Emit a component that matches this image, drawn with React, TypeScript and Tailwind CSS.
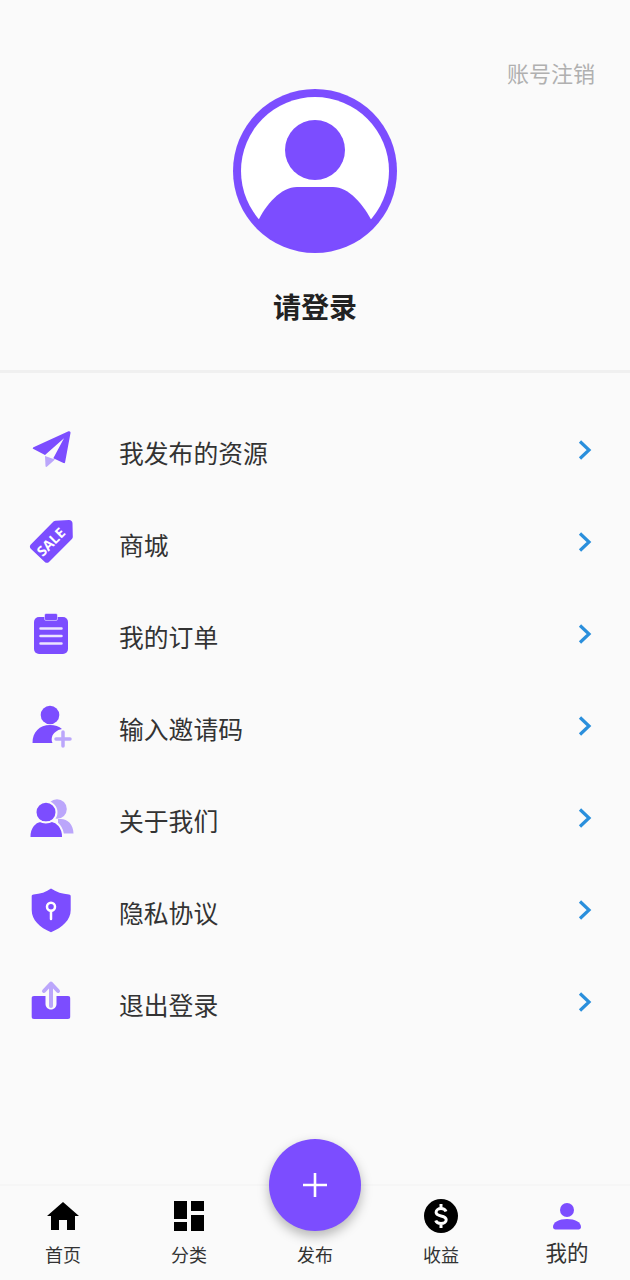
import React from 'react';

const PURPLE = '#7c4dff';
const LIGHT = '#bba6fb';
const CJK = "font-['Roboto','Noto_Sans_CJK_SC',sans-serif]";

const PlaneIcon = () => (
  <svg viewBox="0 0 48 48" className="w-[48px] h-[48px]">
    <path d="M40.500 5.300 5.500 21.300c-1 .5-1 1.300 0 1.800L17 29 36 12.300 25.300 32.300 35.500 37c.8.4 1.400 0 1.600-.8L42.500 7c.2-1.300-.8-2.200-2-1.700Z" fill={PURPLE} />
    <path d="M17 30 17.500 40c.1 1 1 1.200 1.600.6L27 33.500 17 30Z" fill={LIGHT} />
  </svg>
);

const SaleIcon = () => (
  <svg viewBox="0 0 48 48" className="w-[48px] h-[48px]">
    <path d="M2.800 26.500 25.500 3.600c.6-.6 1.300-.9 2.100-.9L41 2c2 0 3.500 1.500 3.500 3.500l.3 13.500c0 .8-.3 1.500-.9 2.100L21 43.900c-1.200 1.200-3 1.200-4.200 0L2.800 30.700c-1.200-1.200-1.200-3 0-4.200Z" fill={PURPLE} />
    <text x="23" y="29" fill="#ffffff" fontSize="14" fontWeight="700" textAnchor="middle" transform="rotate(-45 23 24)" fontFamily="'Open Sans', sans-serif">SALE</text>
  </svg>
);

const OrderIcon = () => (
  <svg viewBox="0 0 48 48" className="w-[48px] h-[48px]">
    <rect x="6" y="7" width="34" height="37" rx="5" fill={PURPLE} />
    <rect x="16.500" y="3.500" width="13" height="7" rx="1.500" fill={PURPLE} stroke="#ffffff" strokeOpacity=".5" strokeWidth="1" />
    <path d="M12.500 18.500h21M12.500 26h21M12.500 33.500h21" stroke="#ffffff" strokeOpacity=".85" strokeWidth="2.500" strokeLinecap="round" />
  </svg>
);

const AddUserIcon = () => (
  <svg viewBox="0 0 48 48" className="w-[48px] h-[48px]">
    <circle cx="22" cy="13" r="9.300" fill={PURPLE} />
    <path d="M4.500 41c0-11 7-18 17.500-18 5 0 9 1.300 12 4-5 1-9 4-10 8-.5 2-.5 4 .5 6H4.500Z" fill={PURPLE} />
    <path d="M35 30v14M28 37h14" stroke={LIGHT} strokeWidth="3.500" strokeLinecap="round" />
  </svg>
);

const AboutIcon = () => (
  <svg viewBox="0 0 48 48" className="w-[48px] h-[48px]">
    <circle cx="29" cy="15" r="9.800" fill={LIGHT} />
    <path d="M32 25c7-.5 13.500 5 13.500 14.500H30V25Z" fill={LIGHT} />
    <circle cx="18" cy="18.300" r="10.500" fill={PURPLE} stroke="#fafafa" strokeWidth="2" />
    <path d="M1.500 44V42.500c0-9.500 6-15 10.500-15.500 3 2 8.500 2 12 0 4.500.5 11 6 11 15.500V44H1.500Z" fill={PURPLE} stroke="#fafafa" strokeWidth="2" />
    <path d="M0 43.500h38v3H0Z" fill="#fafafa" />
  </svg>
);

const PrivacyIcon = () => (
  <svg viewBox="0 0 48 48" className="w-[48px] h-[48px]">
    <path d="M23 2.500C18.500 6 12 8 5.500 8.500c-1 .1-1.800.8-1.800 1.800V24c0 10 8 17.500 19.300 22.300C34.300 41.500 42.700 34 42.700 24V10.300c0-1-.7-1.700-1.700-1.800C34.500 8 28 6 23 2.500Z" fill={PURPLE} />
    <circle cx="23" cy="20.700" r="4" fill="none" stroke="#ffffff" strokeWidth="2.500" />
    <path d="M23 25v8" stroke="#ffffff" strokeWidth="2.500" strokeLinecap="round" />
  </svg>
);

const LogoutIcon = () => (
  <svg viewBox="0 0 48 48" className="w-[48px] h-[48px]">
    <path d="M6 18h11.500v8c0 3 2.500 5.500 5.500 5.500s5.500-2.500 5.500-5.500v-8H40c1.500 0 2.200.8 2.200 2.200v18.600c0 1.500-.8 2.200-2.200 2.200H6c-1.500 0-2.300-.8-2.300-2.200V20.200C3.700 18.800 4.500 18 6 18Z" fill={PURPLE} />
    <path d="M23 28V6M16 13 23 5.500l7 7.500" fill="none" stroke={LIGHT} strokeWidth="4" strokeLinecap="round" strokeLinejoin="round" />
  </svg>
);

const menuItems = [
  { label: '我发布的资源', icon: <PlaneIcon /> },
  { label: '商城', icon: <SaleIcon /> },
  { label: '我的订单', icon: <OrderIcon /> },
  { label: '输入邀请码', icon: <AddUserIcon /> },
  { label: '关于我们', icon: <AboutIcon /> },
  { label: '隐私协议', icon: <PrivacyIcon /> },
  { label: '退出登录', icon: <LogoutIcon /> },
];

const Chevron = () => (
  <svg viewBox="0 0 14 20" className="w-[14px] h-[20px] shrink-0">
    <path d="M2 1.500 11 10l-9 8.500" fill="none" stroke="#2a8fdc" strokeWidth="3.200" />
  </svg>
);

function NavItem({ label, icon, active }: { label: string; icon?: React.ReactNode; active?: boolean }) {
  return (
    <div className="flex-1 flex flex-col items-center">
      <div className="h-[36px] flex items-center justify-center">{icon}</div>
      <span className={active ? 'mt-[6px] text-[21.500px] leading-[28px] text-[#333333]' : 'mt-[8px] text-[18px] leading-[28px] text-[#333333]'}>
        {label}
      </span>
    </div>
  );
}

export default function App() {
  return (
    <div className={`relative w-[630px] h-[1280px] overflow-hidden flex flex-col bg-[#fafafa] ${CJK}`}>
      {/* 头像区域 */}
      <div className="h-[370px] shrink-0 flex flex-col items-center">
        <div className="w-full flex justify-end pr-[35px] pt-[61px]">
          <span className="text-[22px] leading-[28px] text-[#b0b0b0]">账号注销</span>
        </div>
        <svg viewBox="0 0 164 164" className="w-[164px] h-[164px] shrink-0">
          <defs>
            <clipPath id="avatar-clip">
              <circle cx="82" cy="82" r="80" />
            </clipPath>
          </defs>
          <circle cx="82" cy="82" r="82" fill={PURPLE} />
          <circle cx="82" cy="82" r="74" fill="#ffffff" />
          <circle cx="82" cy="61" r="30" fill={PURPLE} />
          <path d="M24 134C33 115 48 98 64 98h36c16 0 30 17 40 36v30H24Z" fill={PURPLE} clipPath="url(#avatar-clip)" />
        </svg>
        <span className="mt-[35px] text-[28px] leading-[42px] font-bold text-[#222222]">请登录</span>
      </div>
      <div className="h-[3px] shrink-0 bg-[#f0f0f0]" />

      {/* 菜单列表 */}
      <div className="flex-1 pt-[31px]">
        {menuItems.map((item) => (
          <div key={item.label} className="h-[92px] flex items-center pl-[28px] pr-[38px]">
            <div className="w-[48px] h-[48px] shrink-0">{item.icon}</div>
            <span className="ml-[43px] flex-1 pt-[10px] text-[24.800px] leading-[32px] text-[#333333]">{item.label}</span>
            <Chevron />
          </div>
        ))}
      </div>

      {/* 底部导航 */}
      <div className="h-[96px] shrink-0 border-t-2 border-[#f6f6f6] flex pt-[12px]">
        <NavItem
          label="首页"
          icon={
            <svg viewBox="0 0 32 28" className="w-[32px] h-[28px]">
              <path d="M16 0 32 14h-4v14h-8V18h-8v10H4V14H0L16 0Z" fill="#000000" />
            </svg>
          }
        />
        <NavItem
          label="分类"
          icon={
            <svg viewBox="0 0 30 30" className="w-[30px] h-[30px]">
              <path d="M0 0h13v18H0ZM17 0h13v10H17ZM17 14h13v16H17ZM0 21h13v9H0Z" fill="#000000" />
            </svg>
          }
        />
        <NavItem label="发布" />
        <NavItem
          label="收益"
          icon={
            <svg viewBox="0 0 34 34" className="w-[34px] h-[34px]">
              <circle cx="17" cy="17" r="17" fill="#000000" />
              <path d="M22 12.500c-.7-1.800-2.600-2.900-5-2.900-2.800 0-4.900 1.400-4.900 3.700s2.100 3.100 4.900 3.700c2.800.6 5.200 1.400 5.200 3.800s-2.400 3.700-5.200 3.700c-2.500 0-4.600-1.200-5.300-3.100M17 5v4.500M17 24.500V29" fill="none" stroke="#ffffff" strokeWidth="3" />
            </svg>
          }
        />
        <NavItem
          active
          label="我的"
          icon={
            <svg viewBox="0 0 28 28" className="w-[28px] h-[28px]">
              <circle cx="14" cy="8" r="7" fill={PURPLE} />
              <path d="M0 25c0-5 6-8 14-8s14 3 14 8c0 1.500-1 2.500-2.500 2.500h-23C1 27.500 0 26.500 0 25Z" fill={PURPLE} />
            </svg>
          }
        />
      </div>

      {/* 发布按钮 */}
      <div className="absolute left-[269px] top-[1139px] w-[92px] h-[92px] rounded-full bg-[#7c4dff] shadow-[0_5px_12px_rgba(0,0,0,0.28)] flex items-center justify-center">
        <svg viewBox="0 0 24 24" className="w-[24px] h-[24px]">
          <path d="M12 0v24M0 12h24" stroke="#ffffff" strokeWidth="2.600" />
        </svg>
      </div>
    </div>
  );
}
